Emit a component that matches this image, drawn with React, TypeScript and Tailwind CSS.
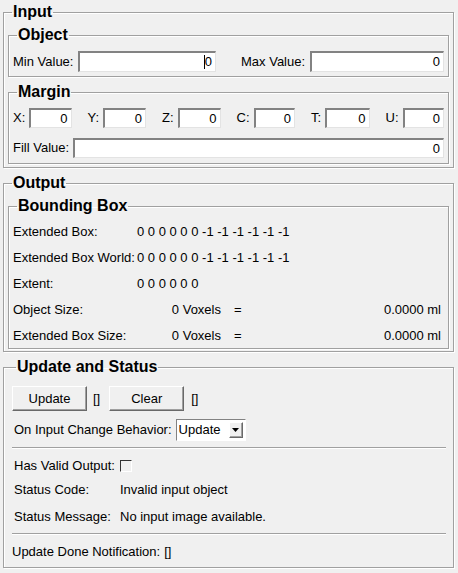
import React from "react";

const legendCls = "ml-[4px] px-[1px] text-[16px] leading-[18px] font-bold text-black";
const groupCls = "border border-[#a0a0a0] shadow-[inset_1px_1px_0_#ffffff,1px_1px_0_#ffffff]";

function Box({ value, h = 20, caret = false }: { value: string; h?: number; caret?: boolean }) {
  return (
    <div
      className={`flex-1 min-w-0 flex items-center justify-end bg-white border-t-2 border-l-2 border-b border-r border-t-[#828282] border-l-[#828282] border-b-[#e3e3e3] border-r-[#e3e3e3] pr-[3px] ${
        h === 21 ? "h-[21px]" : "h-[20px]"
      }`}
    >
      {caret && <span className="w-px h-[14px] bg-black" />}
      <span>{value}</span>
    </div>
  );
}

function Btn({ label }: { label: string }) {
  return (
    <div className="w-[75px] h-[25px] flex items-center justify-center bg-[#f0f0f0] border border-t-white border-l-white border-b-[#696969] border-r-[#696969] shadow-[inset_-1px_-1px_0_#a0a0a0]">
      {label}
    </div>
  );
}

function Sep() {
  return <div className="h-[2px] border-t border-t-[#a0a0a0] border-b border-b-white" />;
}

export default function App() {
  const coords = ["X:", "Y:", "Z:", "C:", "T:", "U:"];
  return (
    <div className="w-[458px] h-[573px] bg-[#f0f0f0] text-black text-[13px] leading-[20px] font-['Liberation_Sans',Arial,sans-serif] pl-[3px] pr-[4px] pt-[3px] overflow-hidden">
      {/* Input */}
      <fieldset className={`${groupCls} px-[4px] pt-[5px] pb-[3px]`}>
        <legend className={legendCls}>Input</legend>
        <fieldset className={`${groupCls} px-[4px] pt-[7px] pb-[4px]`}>
          <legend className={legendCls}>Object</legend>
          <div className="grid grid-cols-2 gap-[25px]">
            <div className="flex items-center gap-[5px]">
              <span>Min Value:</span>
              <Box value="0" h={21} caret />
            </div>
            <div className="flex items-center gap-[5px]">
              <span>Max Value:</span>
              <Box value="0" h={21} />
            </div>
          </div>
        </fieldset>
        <fieldset className={`${groupCls} mt-[6px] px-[4px] pt-[7px] pb-[5px]`}>
          <legend className={legendCls}>Margin</legend>
          <div className="grid grid-cols-6 gap-x-[16px]">
            {coords.map((c) => (
              <div key={c} className="flex items-center gap-[4px]">
                <span>{c}</span>
                <Box value="0" />
              </div>
            ))}
          </div>
          <div className="flex items-center gap-[4px] mt-[10px]">
            <span>Fill Value:</span>
            <Box value="0" />
          </div>
        </fieldset>
      </fieldset>

      {/* Output */}
      <fieldset className={`${groupCls} mt-[6px] px-[4px] pt-[5px] pb-[2px]`}>
        <legend className={legendCls}>Output</legend>
        <fieldset className={`${groupCls} px-[4px] pt-[7px] pb-[2px]`}>
          <legend className={legendCls}>Bounding Box</legend>
          <div className="flex flex-col gap-[6px]">
            <div className="flex h-[20px] items-center">
              <span className="w-[124px]">Extended Box:</span>
              <span>0 0 0 0 0 0 -1 -1 -1 -1 -1 -1</span>
            </div>
            <div className="flex h-[20px] items-center">
              <span className="w-[124px]">Extended Box World:</span>
              <span>0 0 0 0 0 0 -1 -1 -1 -1 -1 -1</span>
            </div>
            <div className="flex h-[20px] items-center">
              <span className="w-[124px]">Extent:</span>
              <span>0 0 0 0 0 0</span>
            </div>
            <div className="flex h-[20px] items-center">
              <span className="w-[124px]">Object Size:</span>
              <span className="w-[84px] text-right">0 Voxels</span>
              <span className="ml-[13px]">=</span>
              <span className="flex-1 text-right pr-[3px]">0.0000 ml</span>
            </div>
            <div className="flex h-[20px] items-center">
              <span className="w-[124px]">Extended Box Size:</span>
              <span className="w-[84px] text-right">0 Voxels</span>
              <span className="ml-[13px]">=</span>
              <span className="flex-1 text-right pr-[3px]">0.0000 ml</span>
            </div>
          </div>
        </fieldset>
      </fieldset>

      {/* Update and Status */}
      <fieldset className={`${groupCls} mt-[6px] pl-[8px] pr-[7px] pt-[10px] pb-[5px]`}>
        <legend className={legendCls}>Update and Status</legend>
        <div className="flex items-center">
          <Btn label="Update" />
          <span className="ml-[6px]">[]</span>
          <div className="ml-[9px]">
            <Btn label="Clear" />
          </div>
          <span className="ml-[7px]">[]</span>
        </div>
        <div className="flex items-center mt-[8px] pl-[2px]">
          <span>On Input Change Behavior:</span>
          <div className="ml-[4px] w-[70px] h-[22px] flex items-center bg-white border-t border-l border-t-[#828282] border-l-[#828282] border-b border-r border-b-white border-r-white pl-[2px] pr-[2px]">
            <span className="flex-1">Update</span>
            <div className="w-[14px] h-[16px] flex items-center justify-center bg-[#f0f0f0] border border-t-white border-l-white border-b-[#696969] border-r-[#696969] shadow-[inset_-1px_-1px_0_#a0a0a0]">
              <svg width="7" height="4" viewBox="0 0 7 4">
                <path d="M0 0H7L3.5 4Z" fill="#000" />
              </svg>
            </div>
          </div>
        </div>
        <div className="mt-[6px]">
          <Sep />
        </div>
        <div className="flex items-center h-[20px] mt-[7px] pl-[2px]">
          <span>Has Valid Output:</span>
          <div className="ml-[5px] w-[12px] h-[12px] bg-[#f0f0f0] border-t border-l border-t-[#333333] border-l-[#333333] border-b border-r border-b-white border-r-white" />
        </div>
        <div className="flex items-center h-[20px] mt-[4px] pl-[2px]">
          <span className="w-[106px]">Status Code:</span>
          <span>Invalid input object</span>
        </div>
        <div className="flex items-center h-[20px] mt-[7px] pl-[2px]">
          <span className="w-[106px]">Status Message:</span>
          <span>No input image available.</span>
        </div>
        <div className="mt-[6px]">
          <Sep />
        </div>
        <div className="flex items-center h-[20px] mt-[7px]">
          <span>Update Done Notification:</span>
          <span className="ml-[4px]">[]</span>
        </div>
      </fieldset>
    </div>
  );
}
